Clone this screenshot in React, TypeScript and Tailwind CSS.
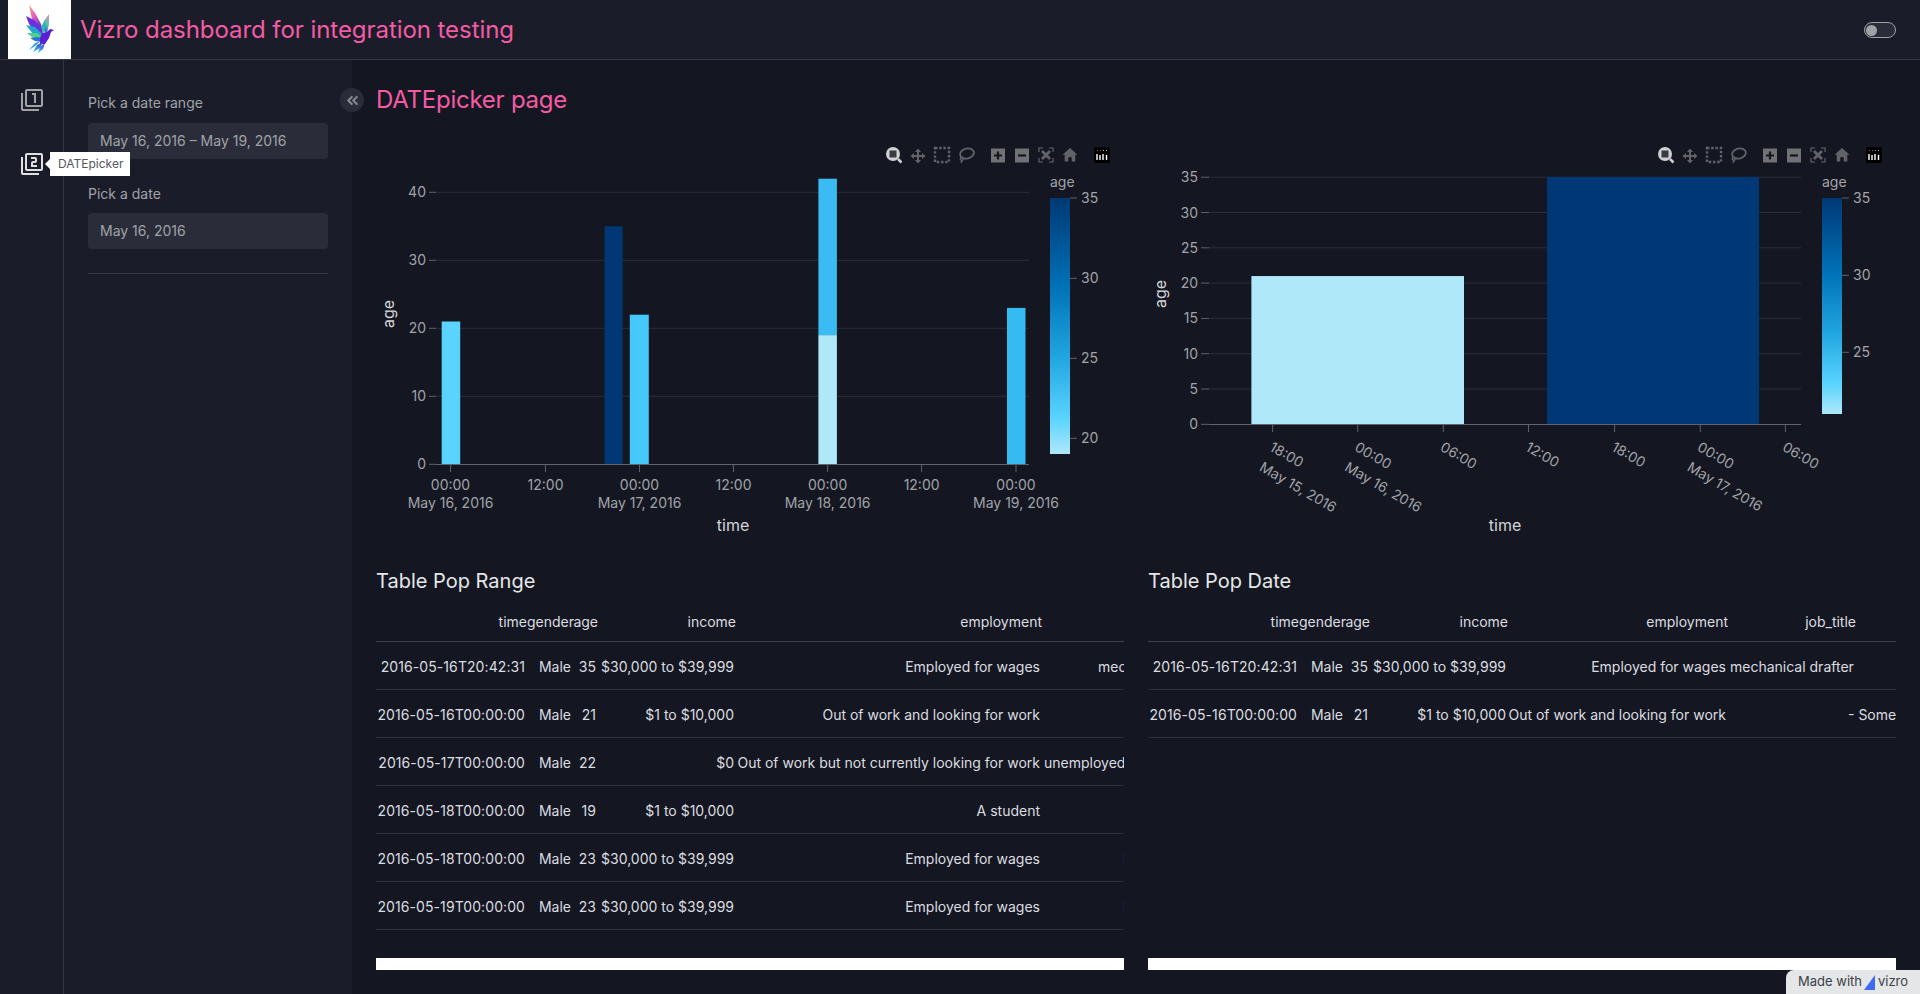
import { ChevronsLeft } from 'lucide-react';
import { MdOutlineFilter1, MdOutlineFilter2 } from 'react-icons/md';

const TICK = '#a1a3a9';
const GRID = '#2b2e38';
const TICK_MARK = '#5f6168';
const LABEL = '#d3d4d7';

const BAR_DARK = '#003875';
const BAR_PALE = '#aee8f9';

type Row = {
  time: string;
  gender: string;
  age: string;
  income: string;
  employment: string;
  job?: string;
  jobClass?: string;
};

const RANGE_ROWS: Row[] = [
  { time: '2016-05-16T20:42:31', gender: 'Male', age: '35', income: '$30,000 to $39,999', employment: 'Employed for wages', job: 'mechanical drafter', jobClass: 'pl-[56px]' },
  { time: '2016-05-16T00:00:00', gender: 'Male', age: '21', income: '$1 to $10,000', employment: 'Out of work and looking for work' },
  { time: '2016-05-17T00:00:00', gender: 'Male', age: '22', income: '$0', employment: 'Out of work but not currently looking for work', job: 'unemployed', jobClass: 'pl-[2px]' },
  { time: '2016-05-18T00:00:00', gender: 'Male', age: '19', income: '$1 to $10,000', employment: 'A student' },
  { time: '2016-05-18T00:00:00', gender: 'Male', age: '23', income: '$30,000 to $39,999', employment: 'Employed for wages', job: 'I', jobClass: 'pl-[81px]' },
  { time: '2016-05-19T00:00:00', gender: 'Male', age: '23', income: '$30,000 to $39,999', employment: 'Employed for wages', job: 'I', jobClass: 'pl-[81px]' },
];

const DATE_ROWS: Row[] = [
  { time: '2016-05-16T20:42:31', gender: 'Male', age: '35', income: '$30,000 to $39,999', employment: 'Employed for wages', job: 'mechanical drafter', jobClass: 'pl-[2px]' },
  { time: '2016-05-16T00:00:00', gender: 'Male', age: '21', income: '$1 to $10,000', employment: 'Out of work and looking for work', job: '- Some', jobClass: 'pl-[120px]' },
];

function Logo() {
  return (
    <svg width="63" height="59" viewBox="8 0 63 59" className="bg-white block">
      <defs>
        <linearGradient id="lgTop" x1="0" y1="0" x2="0.6" y2="1">
          <stop offset="0" stopColor="#f7a35c" />
          <stop offset="0.45" stopColor="#e85fc0" />
          <stop offset="1" stopColor="#4a2bd0" />
        </linearGradient>
        <linearGradient id="lgRight" x1="0.8" y1="0" x2="0.3" y2="1">
          <stop offset="0" stopColor="#f08a9a" />
          <stop offset="0.5" stopColor="#4cc3b8" />
          <stop offset="1" stopColor="#3a2bd0" />
        </linearGradient>
        <linearGradient id="lgTail" x1="1" y1="0" x2="0" y2="1">
          <stop offset="0" stopColor="#3f2bd8" />
          <stop offset="1" stopColor="#35d0e8" />
        </linearGradient>
      </defs>
      <polygon points="29,5 35,13 41,24 43,33 37,29 32,19" fill="url(#lgTop)" />
      <polygon points="26,16 34,20 41,28 43,35 34,30 29,24" fill="#6a2fe0" />
      <polygon points="26,25 35,27 43,35 43,38 33,34" fill="#1fa8c9" />
      <polygon points="27,33 37,33 44,38 42,40 33,38" fill="#52d08a" />
      <polygon points="30,38 38,37 44,39 42,42 35,41" fill="#2a6fe0" />
      <polygon points="49,14 49,24 47,34 43,30 44,21" fill="url(#lgRight)" />
      <polygon points="45,20 45,30 43,33 41,27" fill="#27b8b0" />
      <polygon points="42,33 47,32 50,29 54,30 51,32 49,38 45,44 40,44 40,38" fill="#5a1fd0" />
      <polygon points="43,42 40,48 33,52 37,45" fill="url(#lgTail)" />
      <polygon points="45,43 43,49 38,53 40,47" fill="url(#lgTail)" />
      <polygon points="41,41 35,46 29,50 35,43" fill="#2f9fe0" />
    </svg>
  );
}

function Toolbar({ dx }: { dx: number }) {
  const off = '#626368';
  return (
    <g transform={`translate(${dx} 0)`}>
      {/* zoom, active */}
      <circle cx="893" cy="154" r="7" fill="#d0d1d3" />
      <rect x="889.5" y="150.5" width="7" height="7" fill="#3a3c44" />
      <line x1="898" y1="159" x2="901.5" y2="162.5" stroke="#d0d1d3" strokeWidth="2.5" />
      {/* pan */}
      <path d="M918 148.5l3 3.4h-2v3.1h3.1v-2l3.4 3-3.4 3v-2H919v3.1h2l-3 3.4-3-3.4h2V157h-3.1v2l-3.4-3 3.4-3v2h3.1v-3.1h-2z" fill={off} />
      {/* box select */}
      <rect x="935" y="148" width="14" height="14" fill="none" stroke={off} strokeWidth="2.4" strokeDasharray="2.4 1.8" />
      {/* lasso */}
      <ellipse cx="967" cy="153.5" rx="7" ry="5" fill="none" stroke={off} strokeWidth="1.8" transform="rotate(-15 967 153.5)" />
      <path d="M961 157c-1.4 2-.4 3.4 1 3.4s1.4-2.4 0-3.4m0 3.4l-.8 2.6" fill="none" stroke={off} strokeWidth="1.5" />
      {/* zoom in */}
      <rect x="991" y="148.5" width="14" height="14" fill="#707175" />
      <path d="M998 151.5v8M994 155.5h8" stroke="#141721" strokeWidth="2.2" />
      {/* zoom out */}
      <rect x="1015" y="148.5" width="14" height="14" fill="#707175" />
      <path d="M1018 155.5h8" stroke="#141721" strokeWidth="2.2" />
      {/* autoscale */}
      <path d="M1039 152v-4h4M1049 148h4v4M1053 158v4h-4M1043 162h-4v-4" fill="none" stroke={off} strokeWidth="1.2" />
      <path d="M1042 151l8 8M1050 151l-8 8" stroke={off} strokeWidth="2.8" />
      {/* reset */}
      <path d="M1070 148l7.5 6.8h-2.2v6.7h-3.6v-4.2h-3.4v4.2h-3.6v-6.7h-2.2z" fill={off} />
      {/* plotly logo */}
      <rect x="1094" y="147" width="16" height="16" rx="2" fill="#000" />
      <path d="M1097 154v6M1100 155v5M1103 154v6M1106.5 155v5" stroke="#fff" strokeWidth="1.4" />
      <path d="M1097 150.5h1M1100 150.5h1" stroke="#e0316a" strokeWidth="1.2" />
      <path d="M1103 150.5h1M1106 150.5h1" stroke="#5cc8e0" strokeWidth="1.2" />
    </g>
  );
}

function Colorbar({ id, x, top, bottom, ticks }: { id: string; x: number; top: number; bottom: number; ticks: [string, number][] }) {
  return (
    <g>
      <defs>
        <linearGradient id={id} x1="0" y1="0" x2="0" y2="1">
          <stop offset="0" stopColor="#003875" />
          <stop offset="0.34" stopColor="#0071b6" />
          <stop offset="0.62" stopColor="#20a5e0" />
          <stop offset="0.86" stopColor="#5ad4ff" />
          <stop offset="1" stopColor="#aee8f9" />
        </linearGradient>
      </defs>
      <text x={x} y={187} fontSize="14" fill={TICK}>age</text>
      <rect x={x} y={top} width="20" height={bottom - top} fill={`url(#${id})`} />
      {ticks.map(([label, y]) => (
        <g key={label}>
          <line x1={x + 20} x2={x + 27} y1={y} y2={y} stroke={TICK_MARK} />
          <text x={x + 31} y={y + 5} fontSize="14" fill={TICK}>{label}</text>
        </g>
      ))}
    </g>
  );
}

function RangeChart() {
  const yOf = (v: number) => 464.3 - 6.8 * v;
  const bars = [
    { x: 441.7, w: 18.5, from: 0, to: 21, color: '#5ad4ff' },
    { x: 604.6, w: 18, from: 0, to: 35, color: BAR_DARK },
    { x: 629.8, w: 19, from: 0, to: 22, color: '#45c8fa' },
    { x: 818.4, w: 18.5, from: 0, to: 19, color: BAR_PALE },
    { x: 818.4, w: 18.5, from: 19, to: 42, color: '#3abcf3' },
    { x: 1007, w: 18.5, from: 0, to: 23, color: '#36baf2' },
  ];
  const xTicks: [number, string, string?][] = [
    [450.5, '00:00', 'May 16, 2016'],
    [545.5, '12:00'],
    [639.5, '00:00', 'May 17, 2016'],
    [733.5, '12:00'],
    [827.6, '00:00', 'May 18, 2016'],
    [921.6, '12:00'],
    [1016, '00:00', 'May 19, 2016'],
  ];
  return (
    <svg width="748" height="420" viewBox="376 130 748 420" className="block">
      <Toolbar dx={0} />
      {[0, 10, 20, 30, 40].map((v) => (
        <g key={v}>
          {v > 0 && <line x1="436" x2="1029" y1={yOf(v)} y2={yOf(v)} stroke={GRID} />}
          <line x1="429" x2="436" y1={yOf(v)} y2={yOf(v)} stroke={TICK_MARK} />
          <text x="426" y={yOf(v) + 5} fontSize="14" fill={TICK} textAnchor="end">{v}</text>
        </g>
      ))}
      {bars.map((b) => (
        <rect key={`${b.x}-${b.from}`} x={b.x} y={yOf(b.to)} width={b.w} height={yOf(b.from) - yOf(b.to)} fill={b.color} />
      ))}
      <line x1="436" x2="1029" y1="464.5" y2="464.5" stroke="#62646b" />
      {xTicks.map(([x, time, date]) => (
        <g key={x}>
          <line x1={x} x2={x} y1="465" y2="472" stroke={TICK_MARK} />
          <text x={x} y="490" fontSize="14" fill={TICK} textAnchor="middle">{time}</text>
          {date && <text x={x} y="508" fontSize="14" fill={TICK} textAnchor="middle">{date}</text>}
        </g>
      ))}
      <text x="733" y="531" fontSize="16" fill={LABEL} textAnchor="middle">time</text>
      <text x="0" y="0" fontSize="16" fill={LABEL} textAnchor="middle" transform="translate(394 314) rotate(-90)">age</text>
      <Colorbar id="cbRange" x={1050} top={198} bottom={454} ticks={[['35', 198], ['30', 278.3], ['25', 358.3], ['20', 438.3]]} />
    </svg>
  );
}

function DateChart() {
  const yOf = (v: number) => 424.3 - 7.06 * v;
  const xTicks: [number, string, string?][] = [
    [1272.6, '18:00', 'May 15, 2016'],
    [1357.7, '00:00', 'May 16, 2016'],
    [1443.3, '06:00'],
    [1528.5, '12:00'],
    [1614.6, '18:00'],
    [1700.3, '00:00', 'May 17, 2016'],
    [1785.4, '06:00'],
  ];
  return (
    <svg width="748" height="420" viewBox="1148 130 748 420" className="block">
      <Toolbar dx={772} />
      {[0, 5, 10, 15, 20, 25, 30, 35].map((v) => (
        <g key={v}>
          {v > 0 && <line x1="1209" x2="1801" y1={yOf(v)} y2={yOf(v)} stroke={GRID} />}
          <line x1="1201" x2="1209" y1={yOf(v)} y2={yOf(v)} stroke={TICK_MARK} />
          <text x="1198" y={yOf(v) + 5} fontSize="14" fill={TICK} textAnchor="end">{v}</text>
        </g>
      ))}
      <rect x="1251.4" y={yOf(21)} width="212.6" height={yOf(0) - yOf(21)} fill={BAR_PALE} />
      <rect x="1547" y="177" width="212" height={yOf(0) - 177} fill={BAR_DARK} />
      <line x1="1209" x2="1801" y1="424.5" y2="424.5" stroke="#62646b" />
      {xTicks.map(([x, time, date]) => (
        <g key={x}>
          <line x1={x} x2={x} y1="425" y2="432" stroke={TICK_MARK} />
          <text x={x - 4} y="450" fontSize="14" fill={TICK} transform={`rotate(30 ${x - 4} 450)`}>{time}</text>
          {date && <text x={x - 14} y="470" fontSize="14" fill={TICK} transform={`rotate(30 ${x - 14} 470)`}>{date}</text>}
        </g>
      ))}
      <text x="1505" y="531" fontSize="16" fill={LABEL} textAnchor="middle">time</text>
      <text x="0" y="0" fontSize="16" fill={LABEL} textAnchor="middle" transform="translate(1166 294) rotate(-90)">age</text>
      <Colorbar id="cbDate" x={1822} top={198} bottom={414} ticks={[['35', 198], ['30', 275.3], ['25', 352.3]]} />
    </svg>
  );
}

function DataTable({ title, rows, empClass, jobClass, width }: { title: string; rows: Row[]; empClass: string; jobClass: string; width: string }) {
  const th = 'font-normal text-right align-bottom pb-[9px] border-b border-[#3e4049]';
  const td = 'pt-[3px] pr-[2px] text-right border-b border-[#2b2e38] whitespace-nowrap';
  return (
    <div>
      <h3 className="text-xl leading-7 text-[#e6e7e9] mt-[17px]">{title}</h3>
      <div className="h-[335px] overflow-hidden">
        <table className={`table-fixed border-separate border-spacing-0 text-sm leading-5 text-[#dcdde0] ${width}`}>
          <colgroup>
            <col className="w-[151px]" />
            <col className="w-[46px]" />
            <col className="w-[25px]" />
            <col className="w-[138px]" />
            <col className={empClass} />
            <col className={jobClass} />
          </colgroup>
          <thead>
            <tr className="h-[47px]">
              <th className={th}>time</th>
              <th className={th}>gender</th>
              <th className={th}>age</th>
              <th className={th}>income</th>
              <th className={th}>employment</th>
              <th className={`${th} pr-[40px]`}>job_title</th>
            </tr>
          </thead>
          <tbody>
            {rows.map((r, i) => (
              <tr key={i} className="h-[48px]">
                <td className={`${td} tracking-[0.08px]`}>{r.time}</td>
                <td className={td}>{r.gender}</td>
                <td className={td}>{r.age}</td>
                <td className={td}>{r.income}</td>
                <td className={td}>{r.employment}</td>
                <td className={`pt-[3px] border-b border-[#2b2e38] whitespace-nowrap text-left ${r.jobClass ?? ''}`}>{r.job}</td>
              </tr>
            ))}
          </tbody>
        </table>
      </div>
      <div className="h-3 bg-white mt-[28px]" />
    </div>
  );
}

export default function App() {
  return (
    <div className="relative h-screen overflow-hidden flex flex-col bg-[#141721] font-[Inter,sans-serif]">
      <header className="h-[60px] shrink-0 flex items-start bg-[#1a1d29] border-b border-[#34363f] pl-2">
        <Logo />
        <h1 className="ml-[9px] text-2xl leading-[59px] tracking-[-0.06px] text-[#f55ba5]">Vizro dashboard for integration testing</h1>
        <div className="ml-auto mr-6 mt-[22px] w-8 h-4 rounded-full border-[1.5px] border-[#a0a2a8] bg-[#2a2d39] flex items-center pl-[1px]">
          <span className="block w-[11px] h-[11px] rounded-full bg-[#a0a2a8]" />
        </div>
      </header>

      <div className="flex-1 flex min-h-0">
        <nav className="relative w-16 shrink-0 bg-[#1a1d29] border-r border-[#34363f] flex flex-col items-center pt-[28px] gap-10">
          <MdOutlineFilter1 size={24} className="text-[#a0a2a8]" />
          <MdOutlineFilter2 size={24} className="text-[#dfe0e2]" />
          <div className="absolute left-[50px] top-[92px] z-10 flex items-center h-6 w-20 pl-2 bg-white text-xs text-[#54565c]">
            <span className="absolute left-[-5px] top-[7px] w-0 h-0 border-y-[5px] border-y-transparent border-r-[5px] border-r-white" />
            DATEpicker
          </div>
        </nav>

        <aside className="relative w-[288px] shrink-0 bg-[#1a1d29] px-6 pt-[33px] text-sm">
          <p className="leading-5 text-[#a0a2a8]">Pick a date range</p>
          <div className="mt-[10px] h-9 rounded bg-[#2a2d39] px-3 flex items-center text-[#a0a2a8]">May 16, 2016 – May 19, 2016</div>
          <p className="mt-[25px] leading-5 text-[#a0a2a8]">Pick a date</p>
          <div className="mt-[9px] h-9 rounded bg-[#2a2d39] px-3 flex items-center text-[#a0a2a8]">May 16, 2016</div>
          <div className="mt-6 border-t border-[#34363f]" />
          <button type="button" className="absolute right-[-12px] top-[28px] z-10 w-6 h-6 rounded-full bg-[#2a2d39] flex items-center justify-center text-[#85878e]">
            <ChevronsLeft size={17} strokeWidth={3} />
          </button>
        </aside>

        <main className="flex-1 min-w-0 px-6 pt-6">
          <h2 className="text-2xl leading-8 tracking-[-0.24px] text-[#f55ba5]">DATEpicker page</h2>
          <div className="grid grid-cols-2 gap-x-6 mt-[14px]">
            <RangeChart />
            <DateChart />
            <DataTable title="Table Pop Range" rows={RANGE_ROWS} empClass="w-[306px]" jobClass="w-[300px]" width="w-[966px]" />
            <DataTable title="Table Pop Date" rows={DATE_ROWS} empClass="w-[220px]" jobClass="w-[168px]" width="w-[748px]" />
          </div>
        </main>
      </div>

      <div className="absolute right-0 bottom-0 h-6 w-[134px] rounded-tl-lg bg-[#e5e6e8] flex items-center pl-3 text-[13px] text-[#3a3d46]">
        Made with
        <svg width="12" height="15" viewBox="0 0 12 15" className="mx-[2px]">
          <polygon points="11,0 11,15 0,15" fill="#3d6bf5" />
        </svg>
        vizro
      </div>
    </div>
  );
}
